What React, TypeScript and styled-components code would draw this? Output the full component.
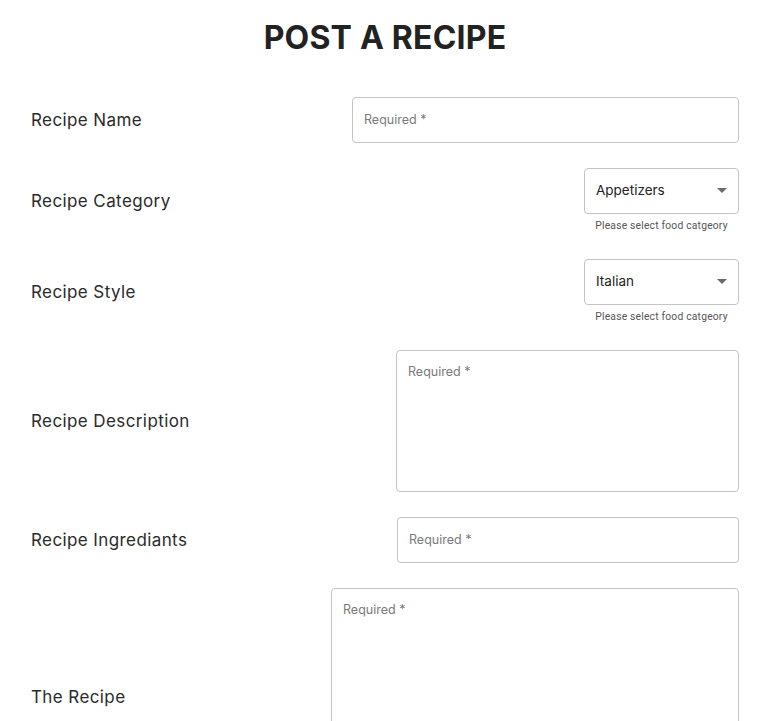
import React from "react";
import styled, { createGlobalStyle } from "styled-components";

const GlobalStyle = createGlobalStyle`
  html, body { margin: 0; padding: 0; background: #ffffff; }
  body { font-family: "Inter", "Noto Sans", sans-serif; color: #222222; }
  * { box-sizing: border-box; }
`;

const Page = styled.div`
  width: 765px;
  padding: 18px 26px 0 31px;
`;

const Title = styled.h1`
  margin: 0 0 39px 0;
  text-align: center;
  font-family: "Inter", "Noto Sans", sans-serif;
  font-weight: 700;
  font-size: 32px;
  line-height: 40px;
  letter-spacing: 0.2px;
  color: #222222;
`;

const Form = styled.form`
  display: flex;
  flex-direction: column;
  gap: 25px;
`;

const Row = styled.div`
  display: flex;
  align-items: center;
  justify-content: space-between;
`;

const Label = styled.label`
  font-size: 17px;
  font-weight: 400;
  color: #2a2a2a;
  letter-spacing: 0.4px;
`;

const FieldBox = styled.div`
  display: flex;
  flex-direction: column;
  align-items: center;
`;

const TextInput = styled.input<{ $w: number }>`
  width: ${(p) => p.$w}px;
  height: 46px;
  border: 1px solid #c4c4c4;
  border-radius: 4px;
  padding: 0 11px 2px 11px;
  font-family: "Inter", "Noto Sans", sans-serif;
  font-size: 12.5px;
  color: #222;
  outline: none;
  &::placeholder { color: #7a7a7a; }
`;

const TextArea = styled.textarea<{ $w: number; $h: number }>`
  width: ${(p) => p.$w}px;
  height: ${(p) => p.$h}px;
  border: 1px solid #c4c4c4;
  border-radius: 4px;
  padding: 13px 11px;
  font-family: "Inter", "Noto Sans", sans-serif;
  font-size: 12.5px;
  line-height: 16px;
  resize: none;
  outline: none;
  &::placeholder { color: #7a7a7a; }
`;

const Select = styled.div`
  width: 155px;
  height: 46px;
  border: 1px solid #c4c4c4;
  border-radius: 4px;
  padding: 0 11px 2px 11px;
  display: flex;
  align-items: center;
  justify-content: space-between;
  font-size: 13.5px;
  color: #222;
`;

const Caret = styled.svg`
  width: 10px;
  height: 5px;
  fill: #6b6b6b;
`;

const Helper = styled.div`
  margin-top: 5px;
  margin-bottom: 1px;
  font-family: "Roboto", "Liberation Sans", sans-serif;
  font-size: 10.3px;
  line-height: 14px;
  letter-spacing: 0.2px;
  color: #555555;
`;

const SelectField = ({ value }: { value: string }) => (
  <FieldBox>
    <Select role="combobox">
      <span>{value}</span>
      <Caret viewBox="0 0 10 5">
        <path d="M0 0 L10 0 L5 5 Z" />
      </Caret>
    </Select>
    <Helper>Please select food catgeory</Helper>
  </FieldBox>
);

export default function App() {
  return (
    <>
      <GlobalStyle />
      <Page>
        <Title>POST A RECIPE</Title>
        <Form>
          <Row>
            <Label>Recipe Name</Label>
            <TextInput $w={387} placeholder="Required *" />
          </Row>
          <Row>
            <Label>Recipe Category</Label>
            <SelectField value="Appetizers" />
          </Row>
          <Row>
            <Label>Recipe Style</Label>
            <SelectField value="Italian" />
          </Row>
          <Row>
            <Label>Recipe Description</Label>
            <TextArea $w={343} $h={142} placeholder="Required *" />
          </Row>
          <Row>
            <Label>Recipe Ingrediants</Label>
            <TextInput $w={342} placeholder="Required *" />
          </Row>
          <Row>
            <Label>The Recipe</Label>
            <TextArea $w={408} $h={218} placeholder="Required *" />
          </Row>
        </Form>
      </Page>
    </>
  );
}
